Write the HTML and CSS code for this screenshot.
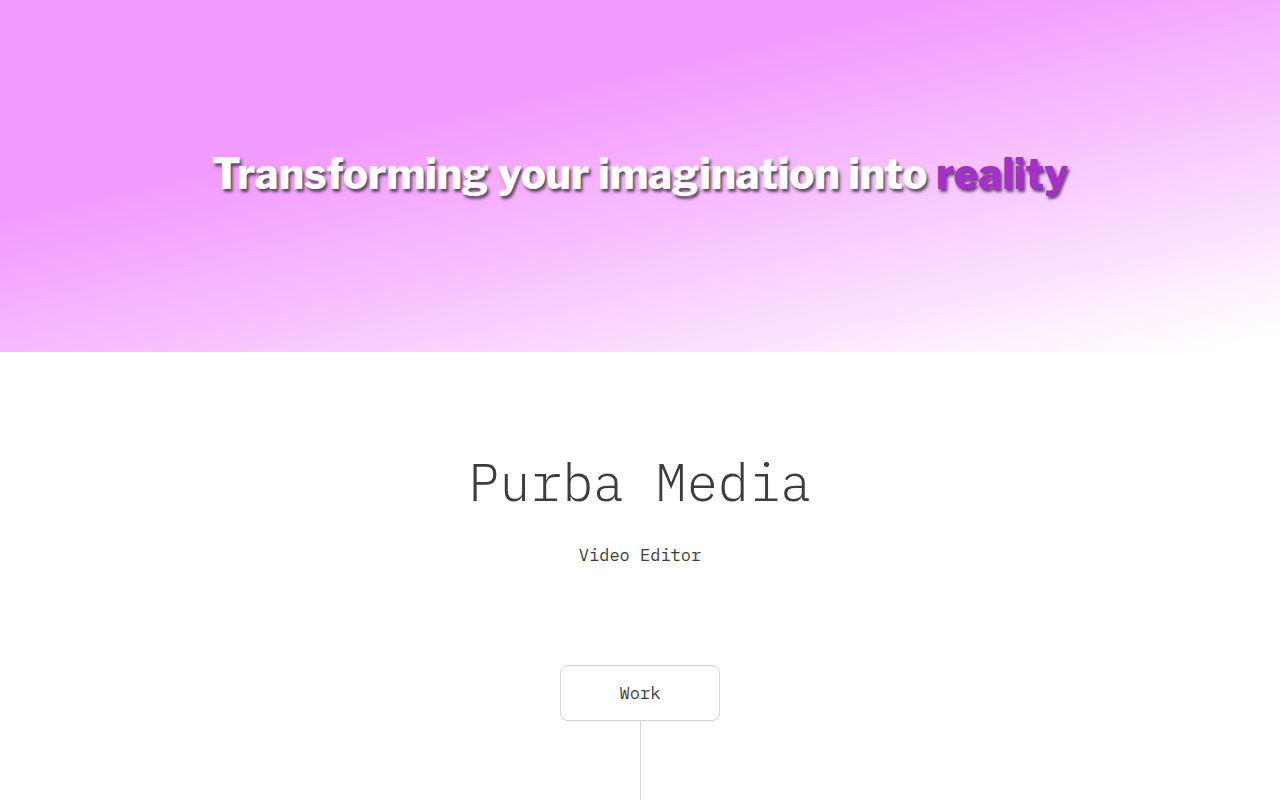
FILE: index.html
```
<!DOCTYPE html>
<html lang="en">
<head>
<meta charset="utf-8">
<meta name="viewport" content="width=device-width, initial-scale=1">
<title>Purba Media</title>
<link rel="stylesheet" href="styles.css">
</head>
<body>
<header class="banner">
  <p class="slogan">Transforming your imagination into <span class="accent">reality</span></p>
</header>
<main class="profile">
  <h1 class="name">Purba Media</h1>
  <p class="role">Video Editor</p>
  <nav class="tree">
    <a class="node" href="#work">Work</a>
    <span class="branch"></span>
  </nav>
</main>
</body>
</html>
```
FILE: styles.css
```
* { box-sizing: border-box; }
body {
  margin: 0;
  min-height: 100vh;
  display: flex;
  flex-direction: column;
  background: #fff;
  color: #3d3d3d;
  font-family: "IBM Plex Mono", "Liberation Mono", monospace;
}
.banner {
  display: flex;
  justify-content: center;
  padding: 144px 24px 148px;
  background: linear-gradient(167deg, #f29bff 34%, #f7bdff 57%, #fff 97%);
}
.slogan {
  margin: 0;
  color: #fff;
  font: 800 42px/60px "Libre Franklin", "Liberation Sans", Arial, sans-serif;
  text-align: center;
  text-shadow: 2px 3px 3px rgba(50, 30, 60, 0.75);
}
.accent { color: #a52fcb; }
.profile {
  flex: 1;
  display: flex;
  flex-direction: column;
  align-items: center;
  padding-top: 96px;
}
.name {
  margin: 0;
  font-size: 52px;
  font-weight: 300;
  line-height: 68px;
  text-align: center;
}
.role {
  margin: 27px 0 0;
  font-size: 17px;
  line-height: 24px;
}
.tree {
  flex: 1;
  display: flex;
  flex-direction: column;
  align-items: center;
  margin-top: 98px;
}
.node {
  min-width: 160px;
  padding: 15px 24px;
  border: 1px solid #d3d3d3;
  border-radius: 8px;
  color: inherit;
  font-size: 17px;
  line-height: 24px;
  text-align: center;
  text-decoration: none;
}
.branch {
  flex: 1;
  min-height: 79px;
  border-left: 1px solid #d3d3d3;
}
```
